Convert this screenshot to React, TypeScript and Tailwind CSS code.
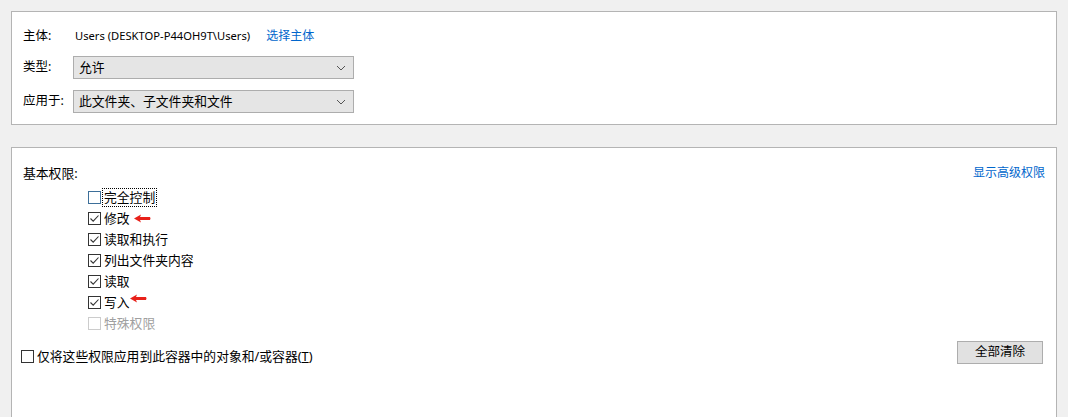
import React from "react";

const font = { fontFamily: '"Segoe UI", "Noto Sans", "Noto Sans CJK SC", sans-serif' };

function Chevron() {
  return (
    <svg width="10" height="6" viewBox="0 0 10 6" className="shrink-0">
      <path d="M1 1 L5 5 L9 1" fill="none" stroke="#555" strokeWidth="1" />
    </svg>
  );
}

function Select({ value }: { value: string }) {
  return (
    <div className="flex h-[23px] w-[281px] items-center justify-between border border-[#adadad] bg-[#e5e5e5] pl-[5px] pr-[7px]">
      <span className="text-[12.8px] leading-none text-[#000]">{value}</span>
      <Chevron />
    </div>
  );
}

function Check({ checked, disabled, focus }: { checked?: boolean; disabled?: boolean; focus?: boolean }) {
  const border = disabled ? "border-[#cccccc]" : focus ? "border-[#3d6f99]" : "border-[#333333]";
  return (
    <div className={`flex h-[13px] w-[13px] shrink-0 items-center justify-center border bg-white ${border}`}>
      {checked && (
        <svg width="11" height="11" viewBox="0 0 11 11">
          <path d="M1.5 5.5 L4.2 8.2 L9.5 2.5" fill="none" stroke="#333" strokeWidth="1.1" />
        </svg>
      )}
    </div>
  );
}

function RedArrow() {
  return (
    <svg width="17" height="9" viewBox="0 0 17 9" className="shrink-0">
      <path d="M0 4.5 L7 0.5 L6 3 L16 3 Q17 4.5 16 6 L6 6 L7 8.5 Z" fill="#e8211a" />
    </svg>
  );
}

export default function App() {
  const rows: { label: string; checked?: boolean; disabled?: boolean; focus?: boolean; arrow?: "a" | "b" }[] = [
    { label: "完全控制", focus: true },
    { label: "修改", checked: true, arrow: "a" },
    { label: "读取和执行", checked: true },
    { label: "列出文件夹内容", checked: true },
    { label: "读取", checked: true },
    { label: "写入", checked: true, arrow: "b" },
    { label: "特殊权限", disabled: true },
  ];
  return (
    <div className="h-[417px] w-[1068px] overflow-hidden bg-[#f0f0f0] px-[11px] pt-[11px] text-[12px] text-black" style={font}>
      <div className="h-[114px] border border-[#b4b4b4] bg-white pl-[11px] pt-[13px]">
        <div className="flex h-[22px] items-center">
          <span className="w-[52px] text-[12.5px] leading-none">主体:</span>
          <span className="text-[11.2px] leading-none">Users (DESKTOP-P44OH9T\Users)</span>
          <span className="ml-[16px] leading-none text-[#0066cc]">选择主体</span>
        </div>
        <div className="mt-[9px] flex items-center">
          <span className="w-[50px] text-[12.5px] leading-none">类型:</span>
          <Select value="允许" />
        </div>
        <div className="mt-[11px] flex items-center">
          <span className="w-[50px] text-[12.5px] leading-none">应用于:</span>
          <Select value="此文件夹、子文件夹和文件" />
        </div>
      </div>

      <div className="mt-[22px] h-[300px] border border-b-0 border-[#b4b4b4] bg-white pl-[11px] pr-[11px] pt-[15px]">
        <div className="flex h-[20px] items-center justify-between">
          <span className="text-[12.8px] leading-none">基本权限:</span>
          <span className="leading-none text-[#0066cc]">显示高级权限</span>
        </div>
        <div className="ml-[65px] mt-[4px] flex flex-col">
          {rows.map((r) => (
            <div key={r.label} className="flex h-[21px] items-center">
              <Check checked={r.checked} disabled={r.disabled} focus={r.focus} />
              <span
                className={`ml-[2px] px-px py-[2px] text-[12.8px] leading-none ${r.disabled ? "text-[#a0a0a0]" : "text-black"} ${
                  r.focus ? "outline outline-1 outline-dotted outline-black" : ""
                }`}
              >
                {r.label}
              </span>
              {r.arrow === "a" && (
                <span className="ml-[3px] flex">
                  <RedArrow />
                </span>
              )}
              {r.arrow === "b" && (
                <span className="-ml-[1px] -mt-[9px] flex">
                  <RedArrow />
                </span>
              )}
            </div>
          ))}
        </div>
        <div className="mt-[7px] flex items-start justify-between">
          <div className="-ml-[2px] mt-[9px] flex items-center">
            <Check />
            <span className="ml-[3px] text-[12.8px] leading-none">
              仅将这些权限应用到此容器中的对象和/或容器(<span className="underline">T</span>)
            </span>
          </div>
          <div className="mr-[2px] flex h-[23px] w-[86px] items-center justify-center border border-[#adadad] bg-[#e1e1e1]">
            <span className="text-[12.5px] leading-none">全部清除</span>
          </div>
        </div>
      </div>
    </div>
  );
}
